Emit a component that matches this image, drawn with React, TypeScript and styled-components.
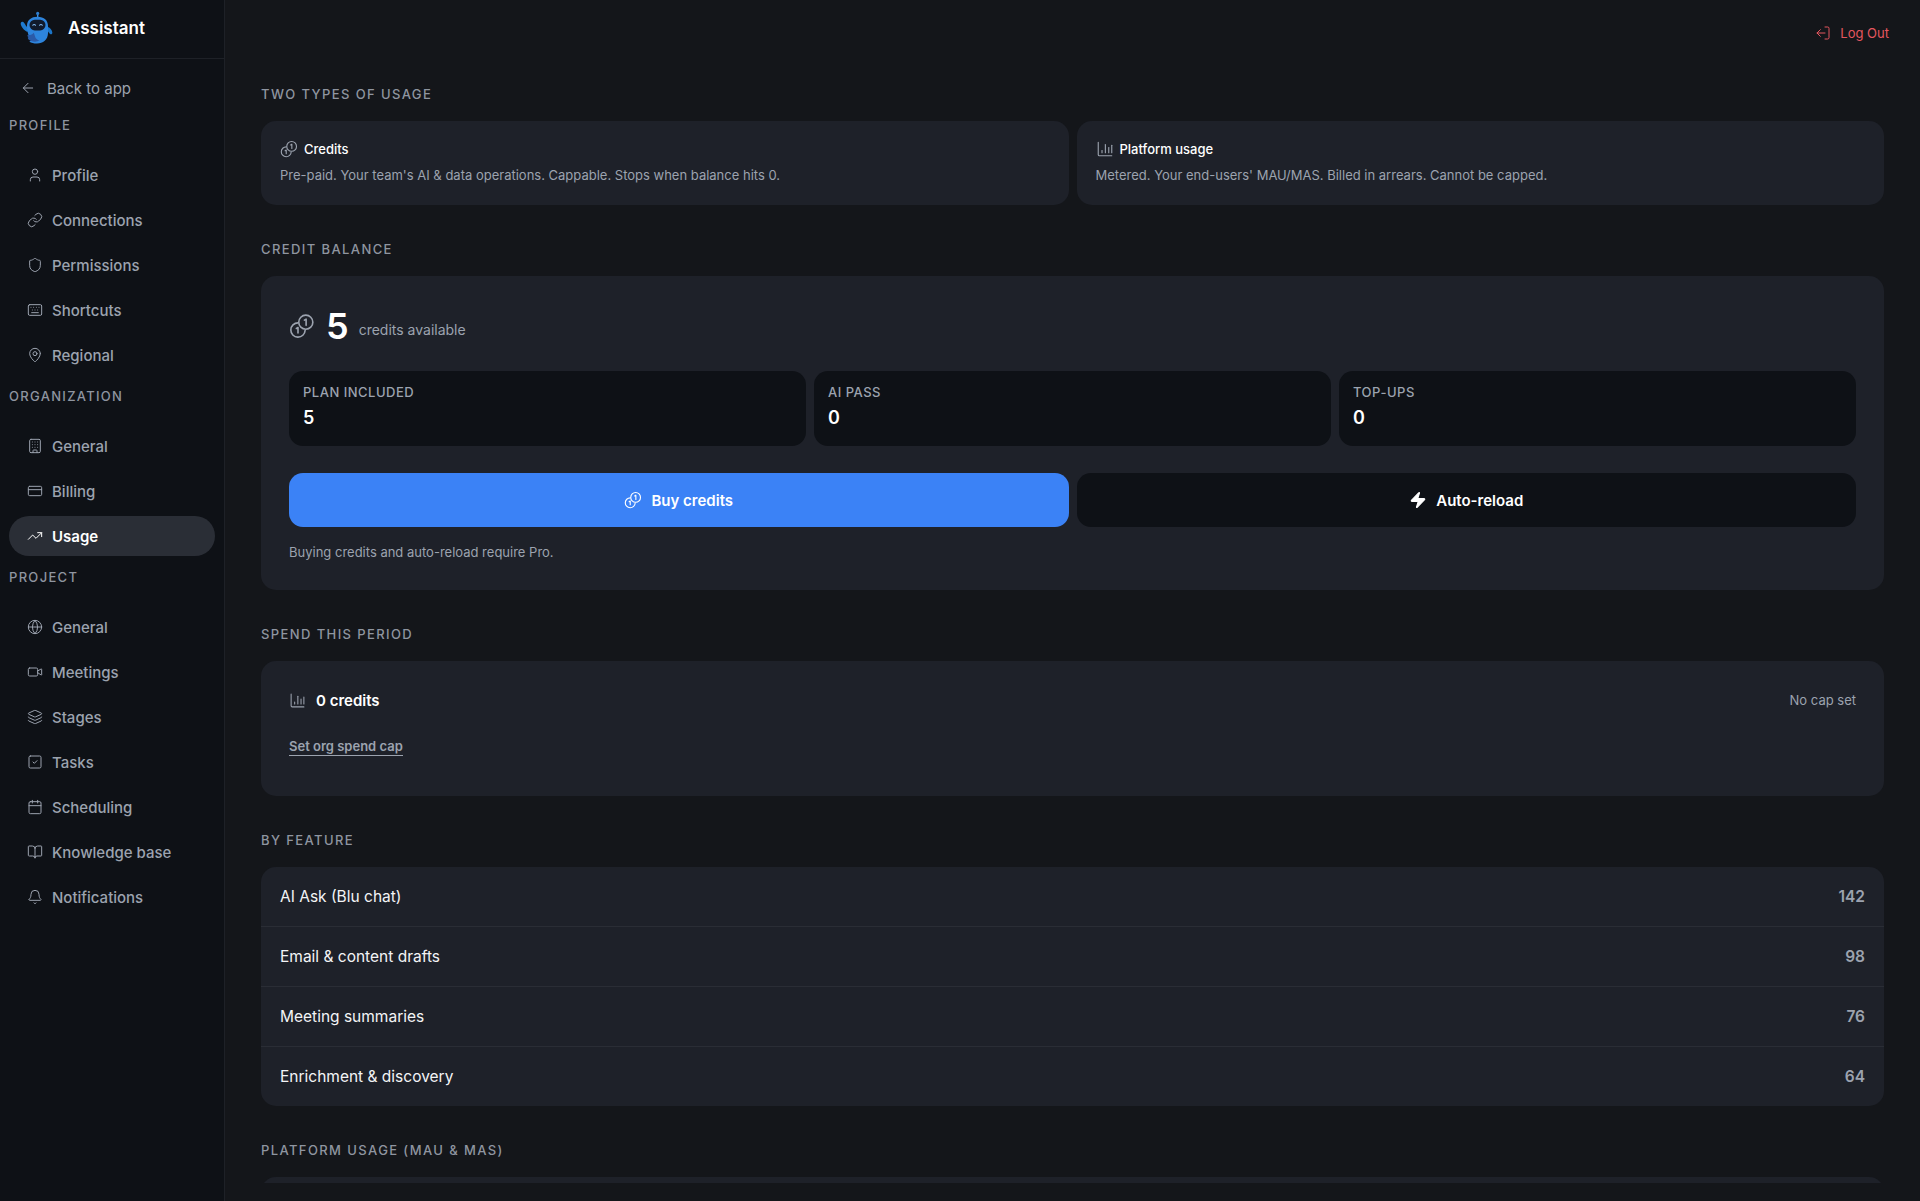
import React from "react";
import styled, { createGlobalStyle } from "styled-components";
import {
  ArrowLeft, Bell, BookOpen, Building, Calendar, CreditCard, Globe, Keyboard, Layers,
  Link as LinkIcon, LogOut, MapPin, Shield, SquareCheck, TrendingUp, User, Video, Zap,
} from "lucide-react";

const GlobalStyle = createGlobalStyle`
  html, body { margin: 0; padding: 0; height: 100%; background: #14161a; }
  body { font-family: Inter, "Liberation Sans", sans-serif; -webkit-font-smoothing: antialiased; }
  * { box-sizing: border-box; }
`;

const Shell = styled.div`
  display: flex;
  height: 1201px;
  overflow: hidden;
  background: #14161a;
`;

const Sidebar = styled.aside`
  width: 225px;
  flex: none;
  background: #0e1116;
  border-right: 1px solid #1e2127;
  display: flex;
  flex-direction: column;
`;

const Brand = styled.div`
  height: 59px;
  flex: none;
  display: flex;
  align-items: center;
  gap: 13px;
  padding: 0 0 3px 19px;
  border-bottom: 1px solid #1e2127;
  font-size: 17px;
  font-weight: 600;
  color: #ffffff;
`;

const BackLink = styled.div`
  height: 58px;
  display: flex;
  align-items: center;
  gap: 11px;
  padding-left: 20px;
  font-size: 15px;
  color: #9ca3af;
  svg { flex: none; }
`;

const NavGroup = styled.nav`
  display: flex;
  flex-direction: column;
  padding: 0 9px;
  margin-bottom: 8px;
`;

const GroupTitle = styled.div`
  height: 17px;
  line-height: 17px;
  margin: 0 0 21px;
  font-size: 13px;
  font-weight: 500;
  letter-spacing: 1.3px;
  color: #8f95a0;
`;

const NavItem = styled.div<{ $active?: boolean }>`
  height: 40px;
  margin-bottom: 5px;
  display: flex;
  align-items: center;
  gap: 9px;
  padding-left: 18px;
  border-radius: 20px;
  font-size: 15px;
  font-weight: ${(p) => (p.$active ? 600 : 500)};
  color: ${(p) => (p.$active ? "#ffffff" : "#9ca3af")};
  background: ${(p) => (p.$active ? "#2a2e36" : "transparent")};
  svg { flex: none; }
`;

const Main = styled.main`
  flex: 1;
  min-width: 0;
  display: flex;
  flex-direction: column;
`;

const TopBar = styled.div`
  height: 86px;
  flex: none;
  display: flex;
  justify-content: flex-end;
  align-items: flex-start;
  padding: 24px 31px 0 0;
`;

const LogoutButton = styled.div`
  display: flex;
  align-items: center;
  gap: 9px;
  height: 18px;
  font-size: 13px;
  color: #e5565f;
`;

const Scroller = styled.div`
  flex: 1;
  min-height: 0;
  overflow: hidden;
  margin-bottom: 18px;
  padding: 0 36px;
  display: flex;
  flex-direction: column;
  gap: 36px;
`;

const Section = styled.section`
  flex: none;
`;

const SectionTitle = styled.h2`
  margin: 0 0 18px;
  height: 17px;
  line-height: 17px;
  font-size: 13px;
  font-weight: 500;
  letter-spacing: 1.4px;
  color: #8f95a0;
`;

const TwoCols = styled.div`
  display: grid;
  grid-template-columns: 1fr 1fr;
  gap: 8px;
`;

const Card = styled.div`
  background: #1e2129;
  border-radius: 15px;
`;

const InfoCard = styled(Card)`
  height: 84px;
  padding: 18px 19px;
`;

const InfoTitle = styled.div`
  display: flex;
  align-items: center;
  gap: 6px;
  height: 20px;
  font-size: 13px;
  font-weight: 500;
  color: #ffffff;
  svg { color: #9ca3af; flex: none; }
`;

const InfoText = styled.p`
  margin: 7px 0 0;
  line-height: 18px;
  font-size: 13px;
  color: #9ca3af;
`;

const BalanceCard = styled(Card)`
  height: 314px;
  padding: 28px;
`;

const BalanceRow = styled.div`
  display: flex;
  align-items: center;
  height: 44px;
  svg { color: #9ca3af; flex: none; }
`;

const BalanceValue = styled.span`
  margin: 0 10px 0 11px;
  font-size: 36px;
  font-weight: 600;
  line-height: 44px;
  color: #ffffff;
`;

const BalanceUnit = styled.span`
  font-size: 14px;
  margin-top: 6px;
  color: #9ca3af;
`;

const StatGrid = styled.div`
  display: grid;
  grid-template-columns: repeat(3, 1fr);
  gap: 8px;
  margin-top: 23px;
`;

const StatCard = styled.div`
  height: 75px;
  padding: 13px 14px;
  background: #0e1116;
  border-radius: 14px;
`;

const StatLabel = styled.div`
  height: 17px;
  line-height: 17px;
  font-size: 13px;
  font-weight: 500;
  letter-spacing: 0.5px;
  color: #9ca3af;
`;

const StatValue = styled.div`
  margin-top: 5px;
  line-height: 24px;
  font-size: 18px;
  font-weight: 600;
  color: #ffffff;
`;

const ActionGrid = styled.div`
  display: grid;
  grid-template-columns: 1fr 1fr;
  gap: 8px;
  margin-top: 27px;
`;

const ActionButton = styled.div<{ $primary?: boolean }>`
  height: 54px;
  display: flex;
  align-items: center;
  justify-content: center;
  gap: 9px;
  border-radius: 14px;
  font-size: 15px;
  font-weight: 600;
  color: #ffffff;
  background: ${(p) => (p.$primary ? "#3b82f6" : "#0e1116")};
  svg { flex: none; }
`;

const Hint = styled.p`
  margin: 16px 0 0;
  line-height: 18px;
  font-size: 13px;
  color: #9ca3af;
`;

const SpendCard = styled(Card)`
  height: 135px;
  padding: 28px;
`;

const SpendRow = styled.div`
  display: flex;
  align-items: center;
  justify-content: space-between;
  height: 22px;
`;

const SpendAmount = styled.div`
  display: flex;
  align-items: center;
  gap: 10px;
  font-size: 15px;
  font-weight: 600;
  color: #ffffff;
  svg { color: #9ca3af; flex: none; }
`;

const SpendNote = styled.span`
  font-size: 13px;
  color: #9ca3af;
`;

const CapLink = styled.span`
  display: inline-block;
  margin-top: 27px;
  line-height: 17px;
  font-size: 13px;
  font-weight: 600;
  color: #9ca3af;
  border-bottom: 1px solid #9ca3af;
`;

const FeatureRow = styled.div`
  height: 60px;
  display: flex;
  align-items: center;
  justify-content: space-between;
  padding: 0 19px;
  border-bottom: 1px solid #2a2d35;
  &:last-child { border-bottom: 0; height: 59px; }
`;

const FeatureName = styled.span`
  font-size: 15.5px;
  color: #f3f4f6;
`;

const FeatureCount = styled.span`
  font-size: 15.5px;
  font-weight: 600;
  color: #9ca3af;
`;

const PlatformCard = styled(Card)`
  height: 200px;
`;

const CoinsIcon = ({ size }: { size: number }) => (
  <svg width={size} height={size} viewBox="0 0 24 24" fill="none" stroke="currentColor" strokeWidth={1.5} strokeLinecap="round" strokeLinejoin="round">
    <circle cx="15.5" cy="8.5" r="6.5" />
    <path d="M14.2 6.6 15.8 5.6v5.8" />
    <path d="M8.3 9.1a6.6 6.6 0 1 0 6.6 6.9" />
    <path d="M6.8 14.3 8.3 13.4v5" />
  </svg>
);

const ChartIcon = ({ size }: { size: number }) => (
  <svg width={size} height={size} viewBox="0 0 24 24" fill="none" stroke="currentColor" strokeWidth={1.5} strokeLinecap="round" strokeLinejoin="round">
    <path d="M3 3v16.5a1.5 1.5 0 0 0 1.5 1.5H21" />
    <path d="M8 17v-3" />
    <path d="M12.5 17V6" />
    <path d="M17 17v-7" />
    <path d="M21 17V7" />
  </svg>
);

const RobotLogo = () => (
  <svg width="36" height="36" viewBox="0 0 36 36" fill="none">
    <path d="M18.7 4.5v3.5" stroke="#3f8fdc" strokeWidth="1.4" />
    <circle cx="18.7" cy="3.4" r="1.6" fill="#2f7fd0" />
    <path d="M2 12.5c-.9 1.2.2 3.4 1.6 5.4 1.5 2.1 3.4 3.6 5.2 3.8l1-3.8c-1.4-.6-2.7-1.9-3.6-3.5-.7-1.3-1.6-2.4-2.6-2.6-.6-.1-1.2 0-1.6.7Z" fill="#1f7bd0" />
    <path d="M8 16c0-5.8 4-9.2 10.6-9.2 6.5 0 10.4 3.6 10.4 9.2v7c0 6.5-5 10.5-11 10.5-3.2 0-5.7-.6-7.8-2 1.2-.4 1.8-1.2 2-2-1.8.2-3-.7-3.4-2 .9 0 1.3-.3 1.6-.8C8.8 24 8 20 8 16Z" fill="url(#robotBody)" />
    <path d="M29 17c2 .8 3.9 3 4.3 5.2.3 1.5-.8 2.4-1.8 2-1-.4-1.7-1.8-2.5-2.8V17Z" fill="#1b75c8" />
    <path d="M8.5 25c2.7.4 5-.7 6.3-2.3l1.8 5.3c1.4 1.6 2.5 2.3 4 2.6-2.7 1.4-5.7 1.4-8.4.5-1.4-.5-2.5-1.3-3.5-2.3 1-.3 1.4-1 1.5-1.6-1.1 0-1.9-.7-1.7-2.2Z" fill="#2a5aa8" />
    <rect x="10.5" y="9.8" width="16" height="10.6" rx="5.3" fill="#101a2c" />
    <path d="M13.8 15.2c.7-1 2-1 2.7 0M20.6 15.2c.7-1 2-1 2.7 0" stroke="#7fb7ee" strokeWidth="1.1" strokeLinecap="round" />
    <defs>
      <linearGradient id="robotBody" x1="18" y1="6" x2="18" y2="34">
        <stop offset="0" stopColor="#2d84dc" />
        <stop offset="1" stopColor="#0f7cc9" />
      </linearGradient>
    </defs>
  </svg>
);

const ICON = { size: 16, strokeWidth: 1.5 };

const navGroups = [
  { title: "PROFILE", items: [
    { label: "Profile", Icon: User },
    { label: "Connections", Icon: LinkIcon },
    { label: "Permissions", Icon: Shield },
    { label: "Shortcuts", Icon: Keyboard },
    { label: "Regional", Icon: MapPin },
  ] },
  { title: "ORGANIZATION", items: [
    { label: "General", Icon: Building },
    { label: "Billing", Icon: CreditCard },
    { label: "Usage", Icon: TrendingUp, active: true },
  ] },
  { title: "PROJECT", items: [
    { label: "General", Icon: Globe },
    { label: "Meetings", Icon: Video },
    { label: "Stages", Icon: Layers },
    { label: "Tasks", Icon: SquareCheck },
    { label: "Scheduling", Icon: Calendar },
    { label: "Knowledge base", Icon: BookOpen },
    { label: "Notifications", Icon: Bell },
  ] },
];

const stats = [
  { label: "PLAN INCLUDED", value: "5" },
  { label: "AI PASS", value: "0" },
  { label: "TOP-UPS", value: "0" },
];

const features = [
  { name: "AI Ask (Blu chat)", count: 142 },
  { name: "Email & content drafts", count: 98 },
  { name: "Meeting summaries", count: 76 },
  { name: "Enrichment & discovery", count: 64 },
];

export default function App() {
  return (
    <Shell>
      <GlobalStyle />
      <Sidebar>
        <Brand>
          <RobotLogo />
          <span>Assistant</span>
        </Brand>
        <BackLink>
          <ArrowLeft {...ICON} />
          <span>Back to app</span>
        </BackLink>
        {navGroups.map((group) => (
          <NavGroup key={group.title}>
            <GroupTitle>{group.title}</GroupTitle>
            {group.items.map(({ label, Icon, active }: any) => (
              <NavItem key={label} $active={active}>
                <Icon {...ICON} />
                <span>{label}</span>
              </NavItem>
            ))}
          </NavGroup>
        ))}
      </Sidebar>
      <Main>
        <TopBar>
          <LogoutButton>
            <LogOut size={16} strokeWidth={1.5} style={{ transform: "scaleX(-1) rotate(0deg)" }} />
            <span>Log Out</span>
          </LogoutButton>
        </TopBar>
        <Scroller>
          <Section>
            <SectionTitle>TWO TYPES OF USAGE</SectionTitle>
            <TwoCols>
              <InfoCard>
                <InfoTitle><CoinsIcon size={18} />Credits</InfoTitle>
                <InfoText>Pre-paid. Your team's AI &amp; data operations. Cappable. Stops when balance hits 0.</InfoText>
              </InfoCard>
              <InfoCard>
                <InfoTitle><ChartIcon size={18} />Platform usage</InfoTitle>
                <InfoText>Metered. Your end-users' MAU/MAS. Billed in arrears. Cannot be capped.</InfoText>
              </InfoCard>
            </TwoCols>
          </Section>
          <Section>
            <SectionTitle>CREDIT BALANCE</SectionTitle>
            <BalanceCard>
              <BalanceRow>
                <CoinsIcon size={26} />
                <BalanceValue>5</BalanceValue>
                <BalanceUnit>credits available</BalanceUnit>
              </BalanceRow>
              <StatGrid>
                {stats.map((s) => (
                  <StatCard key={s.label}>
                    <StatLabel>{s.label}</StatLabel>
                    <StatValue>{s.value}</StatValue>
                  </StatCard>
                ))}
              </StatGrid>
              <ActionGrid>
                <ActionButton $primary><CoinsIcon size={18} />Buy credits</ActionButton>
                <ActionButton><Zap size={18} fill="currentColor" strokeWidth={1.5} />Auto-reload</ActionButton>
              </ActionGrid>
              <Hint>Buying credits and auto-reload require Pro.</Hint>
            </BalanceCard>
          </Section>
          <Section>
            <SectionTitle>SPEND THIS PERIOD</SectionTitle>
            <SpendCard>
              <SpendRow>
                <SpendAmount><ChartIcon size={17} />0 credits</SpendAmount>
                <SpendNote>No cap set</SpendNote>
              </SpendRow>
              <CapLink>Set org spend cap</CapLink>
            </SpendCard>
          </Section>
          <Section>
            <SectionTitle>BY FEATURE</SectionTitle>
            <Card>
              {features.map((f) => (
                <FeatureRow key={f.name}>
                  <FeatureName>{f.name}</FeatureName>
                  <FeatureCount>{f.count}</FeatureCount>
                </FeatureRow>
              ))}
            </Card>
          </Section>
          <Section>
            <SectionTitle>PLATFORM USAGE (MAU &amp; MAS)</SectionTitle>
            <PlatformCard />
          </Section>
        </Scroller>
      </Main>
    </Shell>
  );
}
